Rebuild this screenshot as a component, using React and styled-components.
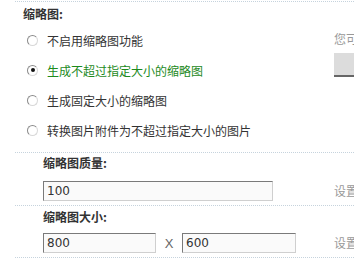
import React from 'react';
import styled, { createGlobalStyle } from 'styled-components';

const GlobalStyle = createGlobalStyle`
  html, body {
    margin: 0;
    padding: 0;
    background: #fff;
    overflow: hidden;
  }
  body {
    font-family: "Noto Sans CJK SC", "DejaVu Sans", sans-serif;
    font-size: 12px;
    color: #333;
  }
`;

const Page = styled.div`
  width: 354px;
  padding: 1px 0 0 15px;
  box-sizing: border-box;
  overflow: hidden;
`;

const Section = styled.div`
  display: grid;
  grid-template-columns: 319px 1fr;
  border-top: 1px dotted #c6d3dd;
  border-bottom: ${(p) => (p.last ? '1px dotted #c6d3dd' : 'none')};
  padding-bottom: ${(p) => p.pb || 0}px;
`;

const Title = styled.div`
  grid-column: 1 / -1;
  font-weight: bold;
  line-height: ${(p) => p.h}px;
  height: ${(p) => p.h}px;
  padding-left: ${(p) => p.indent}px;
  color: #333;
`;

const Options = styled.div`
  display: flex;
  flex-direction: column;
`;

const Option = styled.label`
  display: flex;
  align-items: center;
  height: 30px;
  padding-left: 12px;
  color: ${(p) => (p.checked ? '#1d8a1d' : '#333')};
  white-space: nowrap;
`;

const Radio = styled.span`
  position: relative;
  width: 11px;
  height: 11px;
  box-sizing: border-box;
  border-radius: 50%;
  border: 1px solid;
  border-color: #8a8a8a #d8d8d8 #d8d8d8 #8a8a8a;
  background: #fff;
  margin-right: 9px;
  flex-shrink: 0;

  &::after {
    content: '';
    display: ${(p) => (p.checked ? 'block' : 'none')};
    position: absolute;
    left: 2.5px;
    top: 2.5px;
    width: 4px;
    height: 4px;
    border-radius: 50%;
    background: #111;
  }
`;

const Side = styled.div`
  display: flex;
  flex-direction: column;
  padding-top: 6px;
  white-space: nowrap;
  overflow: hidden;
`;

const Tip = styled.div`
  color: #999;
  line-height: 16px;
  white-space: nowrap;
`;

const GrayBox = styled.div`
  margin-top: 6px;
  width: 80px;
  height: 24px;
  box-sizing: border-box;
  background: #dcdcdc;
  border-bottom: 2px solid #666;
`;

const FieldRow = styled.div`
  display: flex;
  align-items: center;
  padding: ${(p) => p.pt}px 0 4px 28px;
`;

const Input = styled.input`
  width: ${(p) => p.w}px;
  height: 20px;
  box-sizing: border-box;
  border: 1px solid;
  border-color: #7a7a7a #cfcfcf #cfcfcf #7a7a7a;
  background: #fafafa;
  padding: 0 3px;
  font-family: "DejaVu Sans", sans-serif;
  font-size: 12px;
  color: #333;
  outline: none;
`;

const Times = styled.span`
  width: 26px;
  text-align: center;
  font-family: "Liberation Sans", sans-serif;
  font-size: 13px;
  color: #666;
`;

const SideTip = styled(Tip)`
  display: flex;
  align-items: center;
  padding-top: ${(p) => p.pt}px;
  overflow: hidden;
`;

const modes = [
  { label: '不启用缩略图功能' },
  { label: '生成不超过指定大小的缩略图', checked: true },
  { label: '生成固定大小的缩略图' },
  { label: '转换图片附件为不超过指定大小的图片' },
];

export default function App() {
  return (
    <Page>
      <GlobalStyle />
      <Section pb={7}>
        <Title h={23} indent={8}>缩略图:</Title>
        <Options>
          {modes.map((m) => (
            <Option key={m.label} checked={m.checked}>
              <Radio checked={m.checked} />
              {m.label}
            </Option>
          ))}
        </Options>
        <Side>
          <Tip>您可以设置缩略图的生成方式</Tip>
          <GrayBox />
        </Side>
      </Section>
      <Section>
        <Title h={20} indent={28}>缩略图质量:</Title>
        <FieldRow pt={8}>
          <Input w={230} defaultValue="100" />
        </FieldRow>
        <SideTip pt={4}>设置缩略图的质量</SideTip>
      </Section>
      <Section last>
        <Title h={22} indent={28}>缩略图大小:</Title>
        <FieldRow pt={5}>
          <Input w={113} defaultValue="800" />
          <Times>X</Times>
          <Input w={114} defaultValue="600" />
        </FieldRow>
        <SideTip pt={1}>设置缩略图的大小</SideTip>
      </Section>
    </Page>
  );
}
